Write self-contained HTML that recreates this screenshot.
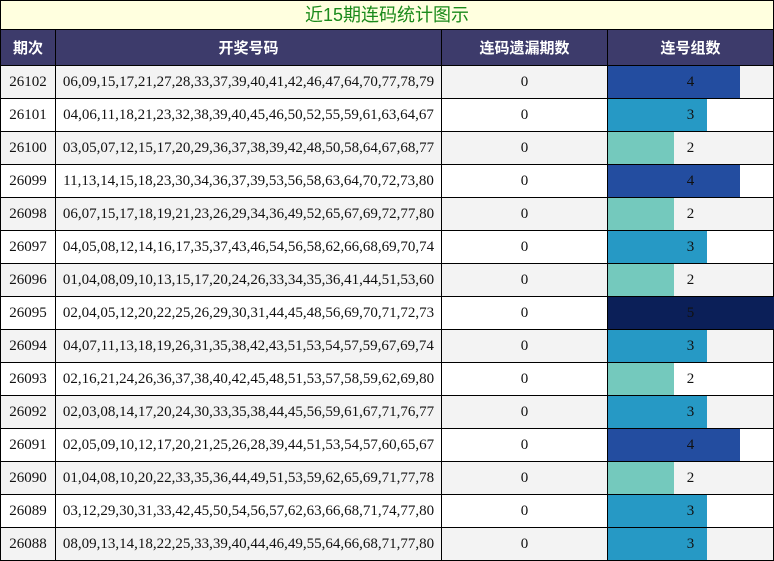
<!DOCTYPE html>
<html><head><meta charset="utf-8"><style>
body{margin:0;width:774px;height:561px;background:#fff;font-family:"Liberation Serif","Noto Serif CJK SC",serif;position:relative;overflow:hidden}
.t{position:absolute;left:0;top:0;width:772px;height:28px;border:1px solid #000;background:#ffffdf;color:#1a8a1a;font-family:"Liberation Sans","Noto Sans CJK SC",sans-serif;font-size:18px;text-align:center;line-height:29px}
table{position:absolute;left:0;top:29px;border-collapse:collapse;table-layout:fixed}
td,th{border:1px solid #000;padding:0;text-align:center;font-size:15px;color:#111}
th{background:#3d3b6b;color:#fff;font-family:"Liberation Sans","Noto Sans CJK SC",sans-serif;font-size:15px;height:35px}
td{height:32px}
tbody tr:nth-child(odd) td{background:#f3f3f3}
td.b{position:relative}
.bar{position:absolute;left:0;top:0;bottom:0}
.n{position:relative}
</style></head><body>
<div class="t">近15期连码统计图示</div>
<table>
<colgroup><col style="width:55px"><col style="width:386px"><col style="width:166px"><col style="width:166px"></colgroup>
<thead><tr><th>期次</th><th>开奖号码</th><th>连码遗漏期数</th><th>连号组数</th></tr></thead>
<tbody>
<tr><td>26102</td><td>06,09,15,17,21,27,28,33,37,39,40,41,42,46,47,64,70,77,78,79</td><td>0</td><td class="b"><div class="bar" style="width:132px;background:#234da0"></div><span class="n">4</span></td></tr>
<tr><td>26101</td><td>04,06,11,18,21,23,32,38,39,40,45,46,50,52,55,59,61,63,64,67</td><td>0</td><td class="b"><div class="bar" style="width:99px;background:#2699c5"></div><span class="n">3</span></td></tr>
<tr><td>26100</td><td>03,05,07,12,15,17,20,29,36,37,38,39,42,48,50,58,64,67,68,77</td><td>0</td><td class="b"><div class="bar" style="width:66px;background:#74c9bd"></div><span class="n">2</span></td></tr>
<tr><td>26099</td><td>11,13,14,15,18,23,30,34,36,37,39,53,56,58,63,64,70,72,73,80</td><td>0</td><td class="b"><div class="bar" style="width:132px;background:#234da0"></div><span class="n">4</span></td></tr>
<tr><td>26098</td><td>06,07,15,17,18,19,21,23,26,29,34,36,49,52,65,67,69,72,77,80</td><td>0</td><td class="b"><div class="bar" style="width:66px;background:#74c9bd"></div><span class="n">2</span></td></tr>
<tr><td>26097</td><td>04,05,08,12,14,16,17,35,37,43,46,54,56,58,62,66,68,69,70,74</td><td>0</td><td class="b"><div class="bar" style="width:99px;background:#2699c5"></div><span class="n">3</span></td></tr>
<tr><td>26096</td><td>01,04,08,09,10,13,15,17,20,24,26,33,34,35,36,41,44,51,53,60</td><td>0</td><td class="b"><div class="bar" style="width:66px;background:#74c9bd"></div><span class="n">2</span></td></tr>
<tr><td>26095</td><td>02,04,05,12,20,22,25,26,29,30,31,44,45,48,56,69,70,71,72,73</td><td>0</td><td class="b"><div class="bar" style="width:166px;background:#0b1f58"></div><span class="n">5</span></td></tr>
<tr><td>26094</td><td>04,07,11,13,18,19,26,31,35,38,42,43,51,53,54,57,59,67,69,74</td><td>0</td><td class="b"><div class="bar" style="width:99px;background:#2699c5"></div><span class="n">3</span></td></tr>
<tr><td>26093</td><td>02,16,21,24,26,36,37,38,40,42,45,48,51,53,57,58,59,62,69,80</td><td>0</td><td class="b"><div class="bar" style="width:66px;background:#74c9bd"></div><span class="n">2</span></td></tr>
<tr><td>26092</td><td>02,03,08,14,17,20,24,30,33,35,38,44,45,56,59,61,67,71,76,77</td><td>0</td><td class="b"><div class="bar" style="width:99px;background:#2699c5"></div><span class="n">3</span></td></tr>
<tr><td>26091</td><td>02,05,09,10,12,17,20,21,25,26,28,39,44,51,53,54,57,60,65,67</td><td>0</td><td class="b"><div class="bar" style="width:132px;background:#234da0"></div><span class="n">4</span></td></tr>
<tr><td>26090</td><td>01,04,08,10,20,22,33,35,36,44,49,51,53,59,62,65,69,71,77,78</td><td>0</td><td class="b"><div class="bar" style="width:66px;background:#74c9bd"></div><span class="n">2</span></td></tr>
<tr><td>26089</td><td>03,12,29,30,31,33,42,45,50,54,56,57,62,63,66,68,71,74,77,80</td><td>0</td><td class="b"><div class="bar" style="width:99px;background:#2699c5"></div><span class="n">3</span></td></tr>
<tr><td>26088</td><td>08,09,13,14,18,22,25,33,39,40,44,46,49,55,64,66,68,71,77,80</td><td>0</td><td class="b"><div class="bar" style="width:99px;background:#2699c5"></div><span class="n">3</span></td></tr>
</tbody>
</table>
</body></html>
